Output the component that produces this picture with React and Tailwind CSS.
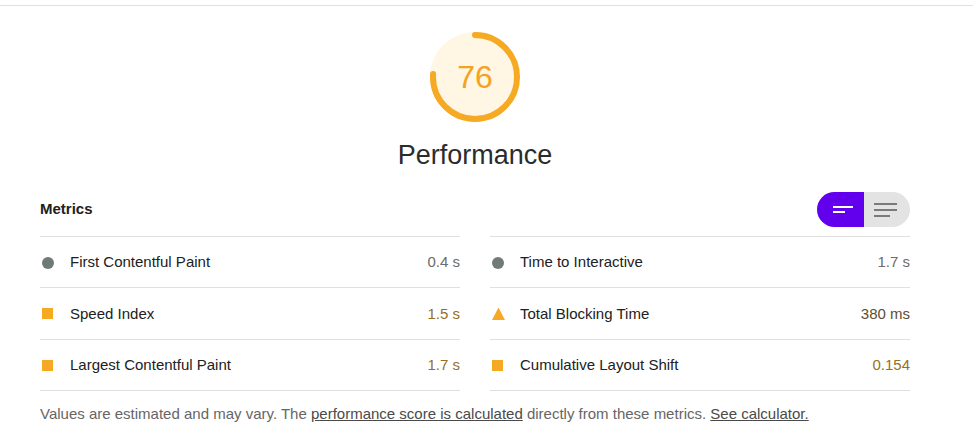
import React from "react";

const metricsLeft = [
  { icon: "circle", label: "First Contentful Paint", value: "0.4 s", vcls: "text-[#6b6b6b]" },
  { icon: "square", label: "Speed Index", value: "1.5 s", vcls: "text-[#96701f]" },
  { icon: "square", label: "Largest Contentful Paint", value: "1.7 s", vcls: "text-[#96701f]" },
];
const metricsRight = [
  { icon: "circle", label: "Time to Interactive", value: "1.7 s", vcls: "text-[#6b6b6b]" },
  { icon: "triangle", label: "Total Blocking Time", value: "380 ms", vcls: "text-[#5e4d33]" },
  { icon: "square", label: "Cumulative Layout Shift", value: "0.154", vcls: "text-[#96701f]" },
];

function Icon({ type }) {
  if (type === "circle") return <div className="ml-[2px] h-[12px] w-[12px] rounded-full bg-[#717b75]" />;
  if (type === "square") return <div className="ml-[2px] h-[11px] w-[11px] bg-[#f6a923]" />;
  return (
    <svg width="13" height="13" viewBox="0 0 13 13" className="ml-[2px]">
      <polygon points="6.5,0.5 13,13 0,13" fill="#f6a923" />
    </svg>
  );
}

function Column({ items }) {
  return (
    <div className="border-t border-[#e0e0e0]">
      {items.map((m) => (
        <div key={m.label} className="flex h-[51.3px] items-center border-b border-[#e0e0e0] pt-[1px]">
          <div className="flex w-[30px] items-center">
            <Icon type={m.icon} />
          </div>
          <div className="flex-1 text-[15px] text-[#212121]">{m.label}</div>
          <div className={`text-[15px] ${m.vcls}`}>{m.value}</div>
        </div>
      ))}
    </div>
  );
}

export default function App() {
  const r = 42;
  const c = 2 * Math.PI * r;
  const pct = 0.76;
  return (
    <div
      className="relative h-[441px] w-[973px] overflow-hidden bg-white"
      style={{ fontFamily: '"Liberation Sans", Arial, sans-serif' }}
    >
      <div className="mt-[5px] border-t border-[#e0e0e0]" />
      <div className="ml-[40px] w-[870px]">
        <div className="mt-[25px] flex flex-col items-center">
          <div className="relative h-[92px] w-[92px]">
            <svg width="92" height="92" viewBox="0 0 92 92">
              <circle cx="46" cy="46" r="45" fill="#fff6e4" />
              <circle
                cx="46"
                cy="46"
                r={r}
                fill="none"
                stroke="#f6a923"
                strokeWidth="6"
                strokeLinecap="round"
                strokeDasharray={`${c * pct} ${c}`}
                transform="rotate(-90 46 46)"
              />
            </svg>
            <div className="absolute inset-0 flex items-center justify-center text-[32px] text-[#f4a21f]">
              76
            </div>
          </div>
          <div className="mt-[17px] text-[27px] leading-[30px] text-[#2b2b2b]">Performance</div>
        </div>

        <div className="mt-[22px] flex h-[35px] items-center justify-between">
          <div className="text-[15px] font-bold text-[#212121]">Metrics</div>
          <div className="flex h-[35px] w-[93px] overflow-hidden rounded-full">
            <div className="flex w-[47px] items-center justify-center bg-[#6200ee] pl-[4px]">
              <div className="flex flex-col gap-[3px]">
                <div className="h-[2px] w-[20px] bg-white" />
                <div className="h-[2px] w-[12px] bg-white" />
              </div>
            </div>
            <div className="flex flex-1 items-center justify-center bg-[#e3e3e3] pr-[4px]">
              <div className="flex flex-col gap-[4px]">
                <div className="h-[2px] w-[23px] bg-[#7a7a7a]" />
                <div className="h-[2px] w-[23px] bg-[#7a7a7a]" />
                <div className="h-[2px] w-[16px] bg-[#7a7a7a]" />
              </div>
            </div>
          </div>
        </div>

        <div className="mt-[9px] grid grid-cols-2 gap-x-[30px]">
          <Column items={metricsLeft} />
          <Column items={metricsRight} />
        </div>

        <div className="mt-[12px] text-[15px] text-[#666666]">
          Values are estimated and may vary. The{" "}
          <span className="text-[#4a4a4a] underline">performance score is calculated</span> directly from these
          metrics. <span className="text-[#4a4a4a] underline">See calculator.</span>
        </div>
      </div>
    </div>
  );
}
